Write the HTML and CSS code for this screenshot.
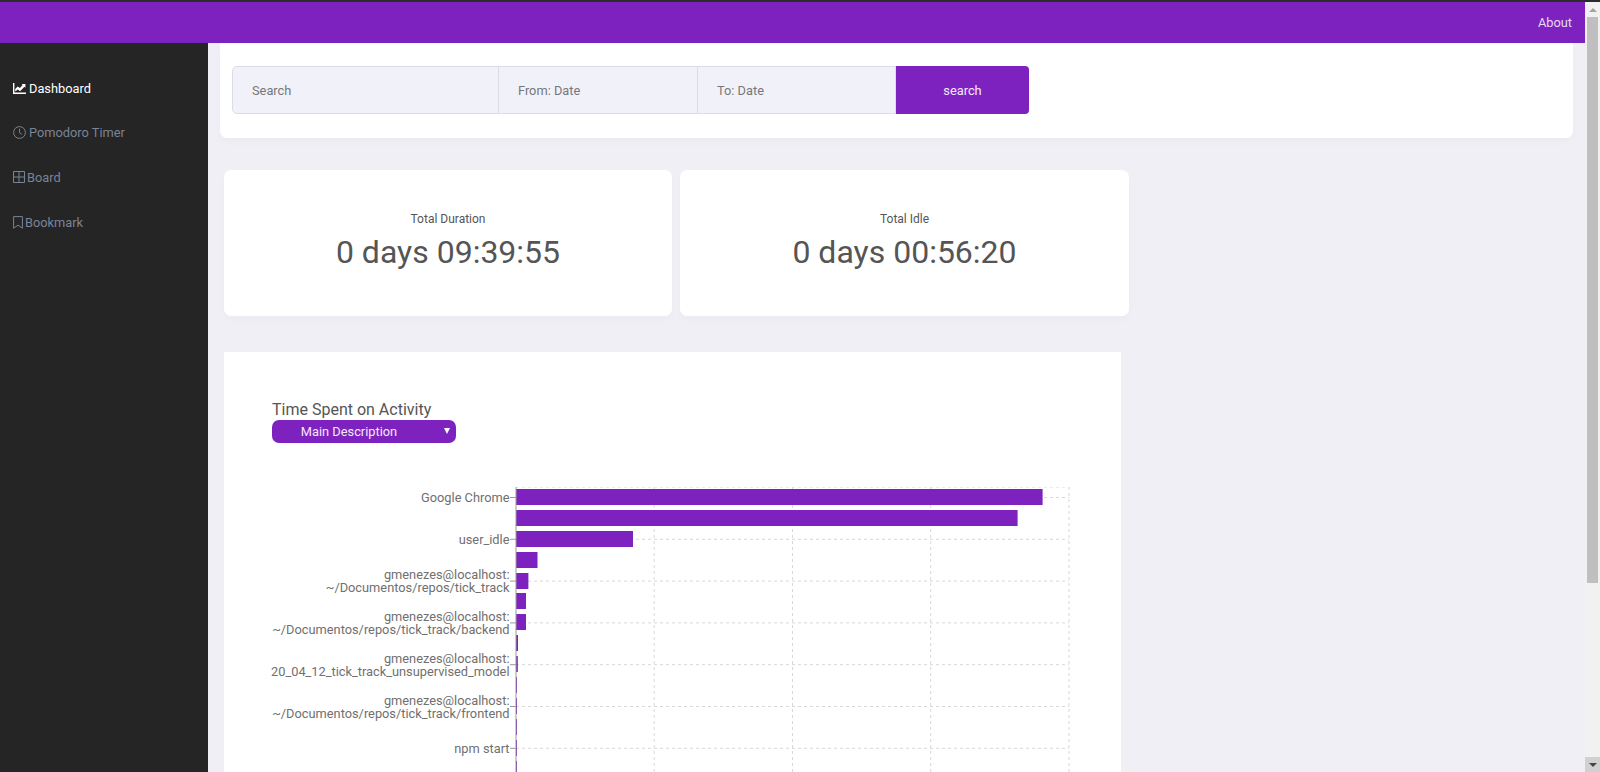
FILE: index.html
```html
<!DOCTYPE html>
<html lang="en">
<head>
<meta charset="utf-8"/>
<meta content="width=device-width, initial-scale=1.0" name="viewport"/>
<title>Tick Track</title>
<link rel="stylesheet" href="styles.css">
</head>
<body>
<div class="pagina">
  <header class="topo">
    <a class="topo-link" href="#">About</a>
  </header>
  <div class="corpo">
    <nav class="lateral">
      <a class="item ativo" href="#">
        <svg class="icone" width="13" height="11" viewBox="0 0 13 11"><path d="M.7 0v10.2H13" fill="none" stroke="currentColor" stroke-width="1.4"/><path d="M2.2 8.4V6l2.5-2.6 2.2 1.6L9.6 2 8.6 1H12.4v3.8l-1-1-4.3 4.4-2.3-1.7-2.6 2z" fill="currentColor"/></svg>
        Dashboard
      </a>
      <a class="item" href="#">
        <svg class="icone" width="13" height="13" viewBox="0 0 13 13"><circle cx="6.5" cy="6.5" r="5.9" fill="none" stroke="currentColor"/><path d="M6.5 2.8v3.9l2.4 1.6" fill="none" stroke="currentColor"/></svg>
        Pomodoro Timer
      </a>
      <a class="item" href="#">
        <svg class="icone icone-board" width="12" height="12" viewBox="0 0 12 12"><path d="M.5.5h11v11H.5zM6 .5v11M.5 6h11" fill="none" stroke="currentColor"/></svg>
        Board
      </a>
      <a class="item" href="#">
        <svg class="icone icone-book" width="10" height="13" viewBox="0 0 10 13"><path d="M.6.6h8.8v11.6L5 9.2.6 12.2z" fill="none" stroke="currentColor"/></svg>
        Bookmark
      </a>
    </nav>
    <main class="conteudo">
      <section class="busca">
        <input class="campo campo-busca" placeholder="Search">
        <input class="campo" placeholder="From: Date">
        <input class="campo campo-ate" placeholder="To: Date">
        <button class="botao">search</button>
      </section>
      <section class="totais">
        <div class="total">
          <div class="total-nome">Total Duration</div>
          <div class="total-valor">0 days 09:39:55</div>
        </div>
        <div class="total total-idle">
          <div class="total-nome">Total Idle</div>
          <div class="total-valor">0 days 00:56:20</div>
        </div>
      </section>
      <section class="grafico">
        <h2>Time Spent on Activity</h2>
        <div class="selecao">Main Description<span class="seta"></span></div>
        <svg class="barras" width="897" height="285" viewBox="0 125 897 285">
          <g class="grade">
            <path d="M292 135.5H845M292 177.3H845M292 219.1H845M292 260.9H845M292 302.7H845M292 344.5H845M292 386.3H845"/>
            <path d="M292 125H845M430.2 125V420M568.5 125V420M706.7 125V420M845 125V420"/>
          </g>
          <g class="colunas">
            <rect x="292" y="127" width="526.6" height="16"/>
            <rect x="292" y="148" width="501.6" height="16"/>
            <rect x="292" y="169" width="117" height="16"/>
            <rect x="292" y="190" width="21.5" height="16"/>
            <rect x="292" y="211" width="12.4" height="16"/>
            <rect x="292" y="231" width="10" height="16"/>
            <rect x="292" y="252" width="10" height="16"/>
            <rect x="292" y="273" width="2" height="16"/>
            <rect x="292" y="294" width="1.8" height="16"/>
            <rect x="292" y="315" width="1" height="16"/>
            <rect x="292" y="336" width="1" height="16"/>
            <rect x="292" y="357" width="1" height="16"/>
            <rect x="292" y="378" width="1" height="16"/>
            <rect x="292" y="399" width="1" height="16"/>
          </g>
          <g class="marcas">
            <path d="M292 125V420"/>
            <path d="M286 135.5H292M286 177.3H292M286 219.1H292M286 260.9H292M286 302.7H292M286 344.5H292M286 386.3H292"/>
          </g>
          <g class="rotulos">
            <text x="285.5" y="140">Google Chrome</text>
            <text x="285.5" y="182">user_idle</text>
            <text x="285.5" y="217">gmenezes@localhost:</text>
            <text x="285.5" y="230">~/Documentos/repos/tick_track</text>
            <text x="285.5" y="259">gmenezes@localhost:</text>
            <text x="285.5" y="272">~/Documentos/repos/tick_track/backend</text>
            <text x="285.5" y="301">gmenezes@localhost:</text>
            <text x="285.5" y="314">20_04_12_tick_track_unsupervised_model</text>
            <text x="285.5" y="343">gmenezes@localhost:</text>
            <text x="285.5" y="356">~/Documentos/repos/tick_track/frontend</text>
            <text x="285.5" y="391">npm start</text>
          </g>
        </svg>
      </section>
    </main>
  </div>
</div>
<div class="rolagem">
  <div class="rolagem-seta"><span class="tri-cima"></span></div>
  <div class="rolagem-trilho"><div class="rolagem-polegar"></div></div>
  <div class="rolagem-seta rolagem-seta-baixo"><span class="tri-baixo"></span></div>
</div>
</body>
</html>
```

FILE: styles.css
```css
body {
  margin: 0;
  font-family: Roboto, sans-serif;
  background: #efeff5;
  color: #555;
  display: flex;
  height: 772px;
  overflow: hidden;
  border-top: 2px solid #2b2b2b;
  box-sizing: border-box;
}
.pagina {
  flex: 1;
  min-width: 0;
  display: flex;
  flex-direction: column;
}
.topo {
  height: 41px;
  flex: none;
  background: #7e22bf;
  display: flex;
  align-items: center;
  justify-content: flex-end;
  padding-right: 13px;
}
.topo-link {
  color: #e9d8f5;
  font-size: 12.8px;
  text-decoration: none;
}
.corpo {
  flex: 1;
  display: flex;
  min-height: 0;
}
.lateral {
  width: 208px;
  flex: none;
  background: #252525;
  padding-top: 23px;
  box-sizing: border-box;
}
.item {
  display: flex;
  align-items: center;
  height: 44.6px;
  padding-left: 13px;
  color: #7a8398;
  font-size: 12.8px;
  text-decoration: none;
}
.item.ativo {
  color: #fff;
}
.icone {
  margin-right: 3px;
  flex: none;
}
.icone-board,
.icone-book {
  margin-right: 2px;
}
.conteudo {
  flex: 1;
  min-width: 0;
  padding: 0 12px;
}
.busca {
  height: 95px;
  background: #fff;
  border-radius: 0 0 7px 7px;
  box-shadow: 0 4px 8px rgba(0,0,0,0.02);
  padding: 23px 12px 0;
  box-sizing: border-box;
  display: flex;
  align-items: flex-start;
}
.campo {
  width: 200px;
  height: 48px;
  box-sizing: border-box;
  background: #f1f1fa;
  border: 1px solid #dcdce8;
  padding: 0 19px;
  font-family: Roboto, sans-serif;
  font-size: 12.8px;
  outline: none;
  margin-right: -1px;
}
.campo-busca {
  width: 267px;
  border-radius: 5px 0 0 5px;
}
.campo-ate {
  width: 199px;
}
.campo::placeholder {
  color: #777;
  opacity: 1;
}
.botao {
  width: 133px;
  height: 48px;
  margin-left: 1px;
  border: none;
  background: #7e22bf;
  color: #f3e8fb;
  font-family: Roboto, sans-serif;
  font-size: 12.8px;
  border-radius: 0 4px 4px 0;
}
.totais {
  display: flex;
  gap: 8px;
  margin: 32px 0 0 4px;
}
.total {
  width: 448px;
  height: 146px;
  background: #fff;
  border-radius: 7px;
  box-shadow: 0 4px 8px rgba(0,0,0,0.02);
  text-align: center;
  padding-top: 41px;
  box-sizing: border-box;
}
.total-idle {
  width: 449px;
}
.total-nome {
  font-size: 12px;
  line-height: 16px;
}
.total-valor {
  font-size: 32px;
  line-height: 38px;
  margin-top: 6px;
}
.grafico {
  width: 897px;
  height: 500px;
  margin: 36px 0 0 4px;
  background: #fff;
  padding: 47px 0 0 48px;
  box-sizing: border-box;
  overflow: hidden;
}
.grafico h2 {
  margin: 0;
  font-size: 16px;
  font-weight: 400;
  line-height: 21px;
}
.selecao {
  position: relative;
  width: 184px;
  height: 23px;
  background: #7e22bf;
  color: #f3e8fb;
  border-radius: 7px;
  font-size: 12.8px;
  line-height: 23px;
  text-align: center;
  box-sizing: border-box;
  padding-right: 30px;
}
.seta {
  position: absolute;
  right: 6px;
  top: 8px;
  border-left: 3px solid transparent;
  border-right: 3px solid transparent;
  border-top: 6px solid #fff;
}
.barras {
  display: block;
  margin: 44px 0 0 -48px;
  overflow: hidden;
}
.grade path {
  fill: none;
  stroke: #d8d8d8;
  stroke-dasharray: 3 3;
}
.marcas path {
  fill: none;
  stroke: #999;
}
.colunas rect {
  fill: #7e22bf;
}
.rotulos text {
  fill: #707070;
  font-size: 12.8px;
  text-anchor: end;
}
.rolagem {
  width: 15px;
  flex: none;
  background: #f1f1f1;
  display: flex;
  flex-direction: column;
}
.rolagem-seta {
  height: 15px;
  flex: none;
  display: flex;
  align-items: center;
  justify-content: center;
}
.rolagem-seta-baixo {
  background: #d0d0d0;
}
.tri-cima {
  border-left: 4px solid transparent;
  border-right: 4px solid transparent;
  border-bottom: 4px solid #a3a3a3;
}
.tri-baixo {
  border-left: 4px solid transparent;
  border-right: 4px solid transparent;
  border-top: 4px solid #444;
}
.rolagem-trilho {
  flex: 1;
  padding: 0 2px;
}
.rolagem-polegar {
  height: 566px;
  background: #bfbfbf;
}
```
